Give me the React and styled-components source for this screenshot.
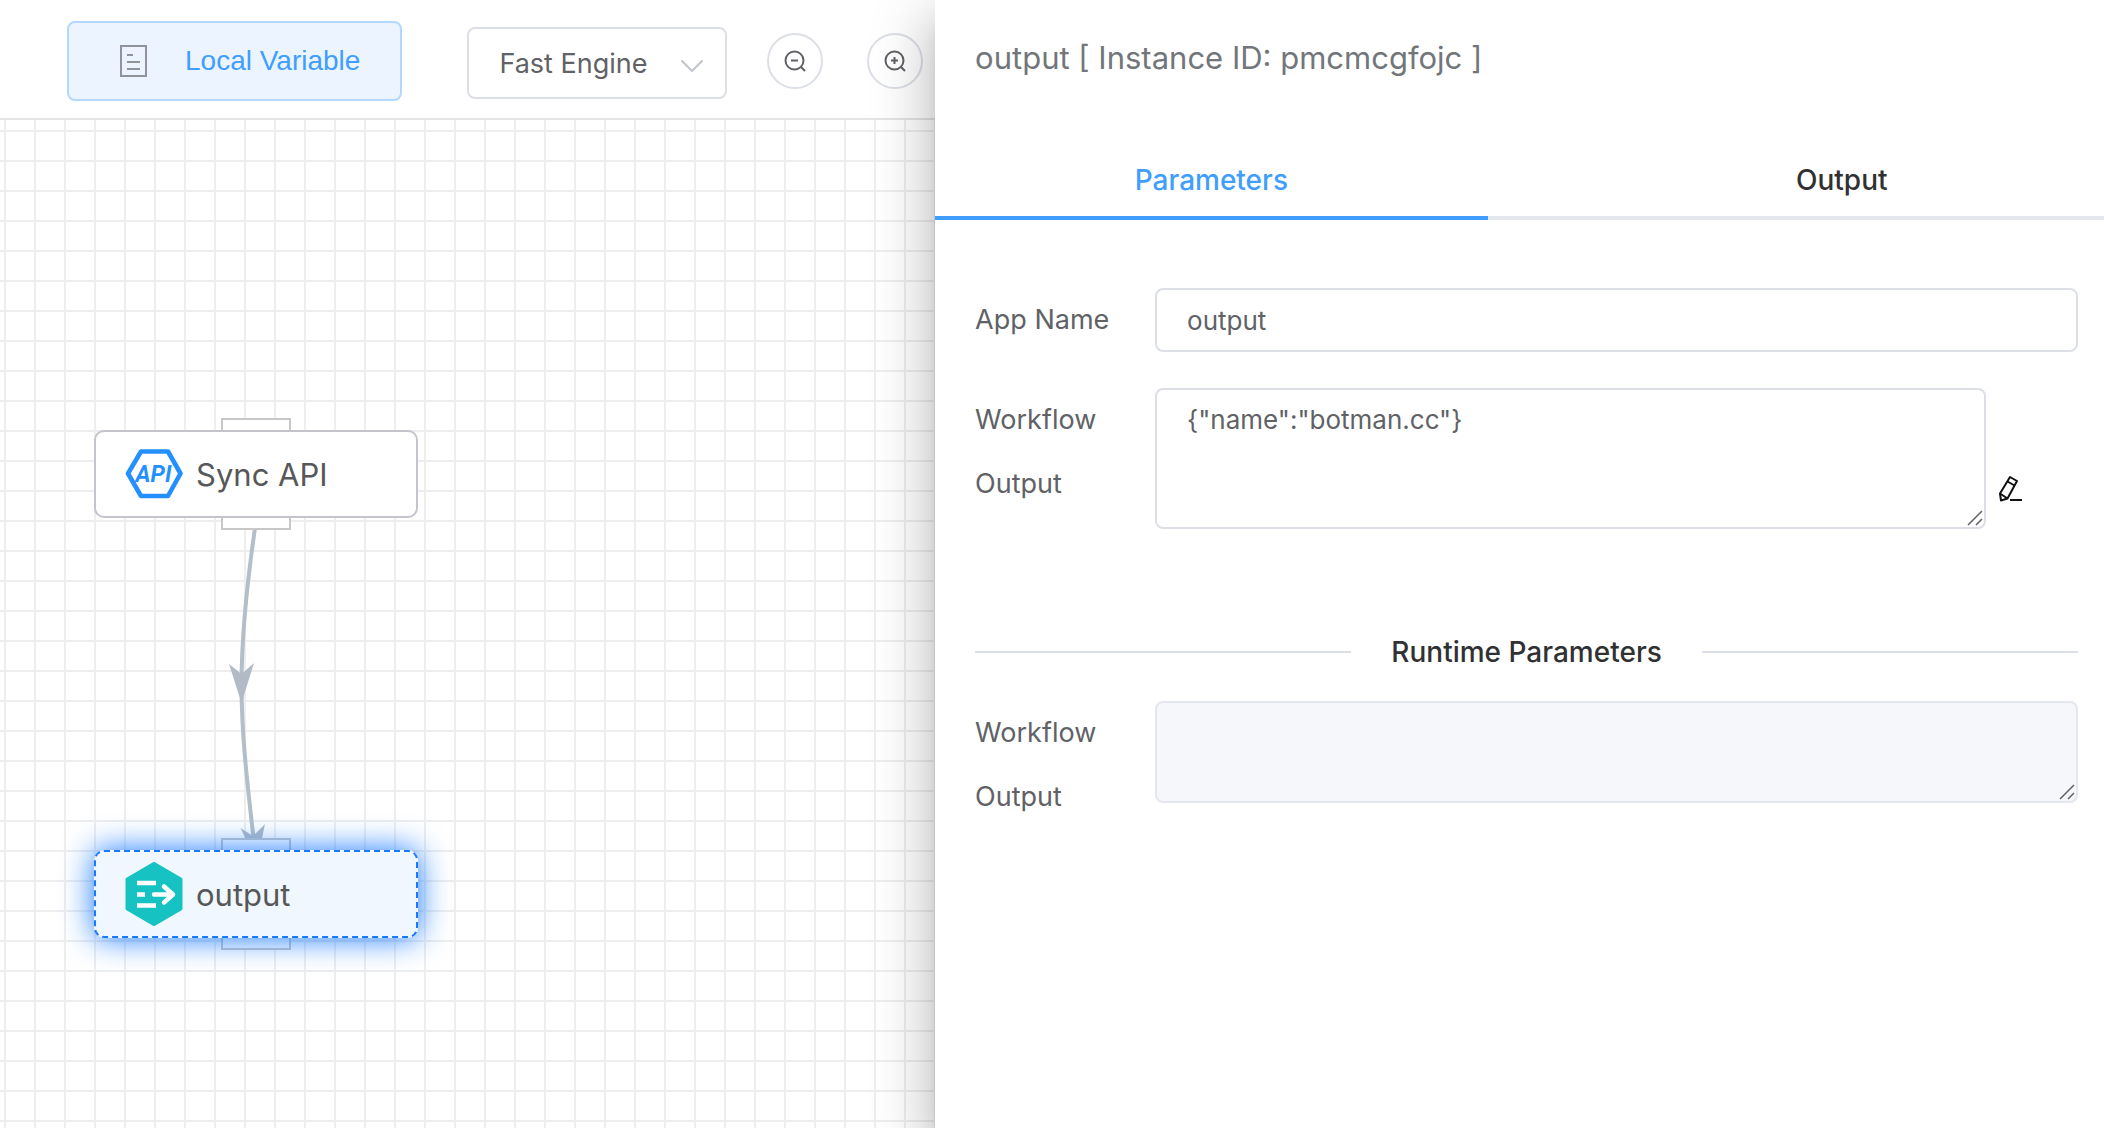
import React from "react";
import styled, { createGlobalStyle, css } from "styled-components";

const GlobalStyle = createGlobalStyle`
  *, *::before, *::after { box-sizing: border-box; }
  body {
    margin: 0;
    background: #fff;
    color: #606266;
    font-family: Inter, "Liberation Sans", sans-serif;
    font-size: 27px;
  }
  button, input, select, textarea { font: inherit; color: inherit; margin: 0; }
`;

const Page = styled.div`
  display: grid;
  grid-template-columns: minmax(0, 4fr) minmax(0, 5fr);
  min-height: 100vh;
  overflow: hidden;
`;

const Workspace = styled.main`
  display: flex;
  flex-direction: column;
  min-width: 0;
`;

const Toolbar = styled.header`
  display: flex;
  align-items: center;
  height: 120px;
  padding: 4px 0 0 67px;
  border-bottom: 2px solid #e4e4e4;
  background: #fff;
`;

const VariableButton = styled.button`
  display: flex;
  align-items: center;
  flex: none;
  gap: 37px;
  height: 80px;
  padding: 0 40px 0 50px;
  border: 2px solid #b3d8ff;
  border-radius: 8px;
  background: #ecf5ff;
  color: #409eff;
  font-family: "Liberation Sans", Arial, sans-serif;
  font-size: 28px;
  white-space: nowrap;
`;

const SelectBox = styled.div`
  position: relative;
  flex: none;
  width: 260px;
  margin: 0 40px 0 65px;
  padding-top: 4px;

  svg {
    position: absolute;
    right: 24px;
    top: 37px;
    pointer-events: none;
  }
`;

const Select = styled.select`
  display: block;
  appearance: none;
  width: 100%;
  height: 72px;
  padding: 0 64px 0 30px;
  border: 2px solid #dcdfe6;
  border-radius: 8px;
  background: #fff;
  font-size: 27px;
`;

const ZoomButtons = styled.div`
  display: flex;
  gap: 44px;
`;

const RoundButton = styled.button`
  display: grid;
  place-items: center;
  flex: none;
  width: 56px;
  height: 56px;
  padding: 0;
  border: 2px solid #dcdfe6;
  border-radius: 50%;
  background: #fff;
`;

const Canvas = styled.section`
  position: relative;
  flex: 1;
  background-color: #fff;
  background-image:
    linear-gradient(to right, #eee 2px, transparent 2px),
    linear-gradient(to bottom, #eee 2px, transparent 2px);
  background-size: 30px 30px;
  background-position: 4px 10px;
`;

const Links = styled.svg`
  position: absolute;
  left: 0;
  top: 0;
`;

const Node = styled.div`
  position: absolute;
  left: 94px;
  top: ${(p) => p.$top}px;
  width: 324px;
  height: 88px;
`;

const Port = styled.span`
  position: absolute;
  left: 127px;
  width: 70px;
  height: 24px;
  border: 2px solid #c8c8c8;
  background: #fff;
  ${(p) => (p.$side === "top" ? "top: -12px;" : "bottom: -12px;")}
`;

const NodeBody = styled.div`
  position: relative;
  display: flex;
  align-items: center;
  gap: 13px;
  height: 100%;
  padding: 0 29px;
  border: 2px solid #c4c4cc;
  border-radius: 10px;
  background: #fff;
  color: #565758;
  font-size: 31px;

  ${(p) =>
    p.$selected &&
    css`
      border: 2px dashed #1879ff;
      background: #f0f7ff;
      box-shadow: 0 0 32px #1879ff;
    `}
`;

const Drawer = styled.aside`
  position: relative;
  min-width: 0;
  background: #fff;
  box-shadow:
    0 16px 20px -10px rgba(0, 0, 0, 0.2),
    0 32px 48px 4px rgba(0, 0, 0, 0.14),
    0 12px 60px 10px rgba(0, 0, 0, 0.12);
`;

const Title = styled.h1`
  margin: 0;
  padding: 40px 40px 64px;
  color: #72767b;
  font-size: 31px;
  font-weight: 400;
  line-height: 36px;
`;

const Tabs = styled.div`
  display: flex;
  height: 80px;
  box-shadow: inset 0 -4px #e4e7ed;
`;

const Tab = styled.button`
  position: relative;
  width: 50%;
  padding: ${(p) => (p.$active ? "0 32px 0 0" : "0 0 0 60px")};
  border: 0;
  background: none;
  color: ${(p) => (p.$active ? "#409eff" : "#303133")};
  font-size: 28px;
  font-weight: 500;
  line-height: 80px;

  ${(p) =>
    p.$active &&
    css`
      &::after {
        content: "";
        position: absolute;
        left: 0;
        right: 32px;
        bottom: 0;
        height: 4px;
        background: #409eff;
      }
    `}
`;

const Form = styled.form`
  padding: 68px 26px 40px 40px;
`;

const Row = styled.div`
  display: flex;
  align-items: flex-start;
  margin-bottom: ${(p) => (p.$last ? 0 : 36)}px;
`;

const Label = styled.label`
  flex: none;
  width: 180px;
  padding-right: 24px;
  font-size: 27px;
  line-height: 64px;
`;

const field = css`
  display: block;
  width: 100%;
  border: 2px solid #dcdfe6;
  border-radius: 8px;
  background: #fff;
  color: #606266;
  font-size: 26px;
`;

const TextInput = styled.input`
  ${field}
  height: 64px;
  padding: 0 30px;
`;

const AreaWrap = styled.div`
  position: relative;
  flex: 1;
  min-width: 0;

  svg {
    position: absolute;
    right: 3px;
    bottom: 3px;
    pointer-events: none;
  }
`;

const Area = styled.textarea`
  ${field}
  height: ${(p) => p.$height}px;
  padding: 10px 30px;
  line-height: 39px;
  resize: none;

  &:disabled {
    border-color: #e4e7ed;
    background: #f5f7fa;
  }
`;

const EditButton = styled.button`
  flex: none;
  align-self: center;
  width: 92px;
  margin-top: 60px;
  padding: 0 0 0 12px;
  border: 0;
  background: none;
  text-align: left;
  line-height: 0;
`;

const Divider = styled.h2`
  display: flex;
  align-items: center;
  gap: 40px;
  margin: 103px 0 29px;
  color: #303133;
  font-size: 28px;
  font-weight: 500;
  line-height: 40px;

  &::before,
  &::after {
    content: "";
    flex: 1;
    height: 2px;
    background: #dcdfe6;
  }
`;

const DocumentIcon = () => (
  <svg width="29" height="32" viewBox="0 0 29 32" fill="none" stroke="#909399" strokeWidth="2">
    <rect x="2" y="1" width="25" height="30" />
    <path d="M8 10h6M8 17h13M8 24h13" />
  </svg>
);

const ChevronIcon = () => (
  <svg width="22" height="13" viewBox="0 0 22 13" fill="none" stroke="#c0c4cc" strokeWidth="2">
    <path d="M1 1l10 10L21 1" strokeLinecap="round" strokeLinejoin="round" />
  </svg>
);

const MagnifierIcon = ({ plus }) => (
  <svg width="24" height="24" viewBox="0 0 24 24" fill="none" stroke="#606266" strokeWidth="2">
    <circle cx="11.5" cy="11.5" r="9" />
    <path d="M18 18l4 4M8 11.5h7" />
    {plus && <path d="M11.5 8v7" />}
  </svg>
);

const ApiIcon = () => (
  <svg width="58" height="52" viewBox="0 0 58 52">
    <path
      d="M16 3.5h27l12.5 22L43 48H16L3 25.5z"
      fill="#fff"
      stroke="#2490ff"
      strokeWidth="4.6"
      strokeLinejoin="round"
    />
    <text
      x="28.5"
      y="34"
      textAnchor="middle"
      fill="#2490ff"
      fontFamily="Roboto, sans-serif"
      fontSize="23"
      fontWeight="700"
      fontStyle="italic"
    >
      API
    </text>
  </svg>
);

const OutputIcon = () => (
  <svg width="58" height="64" viewBox="0 0 58 64">
    <path
      d="M29 2L55.500 17.500V46.500L29 62L2.500 46.500V17.500z"
      fill="#17c2c2"
      stroke="#17c2c2"
      strokeWidth="4"
      strokeLinejoin="round"
    />
    <path d="M12 21h19M12 32.500h8M12 43.500h19" stroke="#fff" strokeWidth="4.500" />
    <path
      d="M29 32.500h19M39 24.500l9 8-9 8"
      fill="none"
      stroke="#fff"
      strokeWidth="4.500"
      strokeLinecap="round"
      strokeLinejoin="round"
    />
  </svg>
);

const PencilIcon = () => (
  <svg width="26" height="28" viewBox="0 0 26 28" fill="none" stroke="#111" strokeWidth="2">
    <path d="M12 2l7 4-9.500 17.500-6.500 2-1-7z" strokeLinejoin="round" />
    <path d="M9.500 6.500l7 4M2 18.500l7.500 5" />
    <path d="M12 25h12" />
  </svg>
);

const ResizeGrip = () => (
  <svg width="16" height="16" viewBox="0 0 16 16" fill="none" stroke="#606060" strokeWidth="1.500">
    <path d="M1 15L15 1M9 15l6-6" />
  </svg>
);

export default function App() {
  return (
    <Page>
      <GlobalStyle />
      <Workspace>
        <Toolbar>
          <VariableButton type="button">
            <DocumentIcon />
            Local Variable
          </VariableButton>
          <SelectBox>
            <Select aria-label="Engine" defaultValue="fast">
              <option value="fast">Fast Engine</option>
            </Select>
            <ChevronIcon />
          </SelectBox>
          <ZoomButtons>
            <RoundButton type="button" aria-label="Zoom out">
              <MagnifierIcon />
            </RoundButton>
            <RoundButton type="button" aria-label="Zoom in">
              <MagnifierIcon plus />
            </RoundButton>
          </ZoomButtons>
        </Toolbar>
        <Canvas>
          <Links width="420" height="800" viewBox="0 0 420 800">
            <path
              d="M255 408C246 470 241.500 520 241.500 566S247 662 254 722"
              fill="none"
              stroke="#b2bec8"
              strokeWidth="4"
            />
            <path d="M229 544l12.500 10 12.500-11-12.500 40z" fill="#b2bbc5" />
            <path d="M240.500 708l12.500 8 12-12-8 38z" fill="#b2bbc5" />
          </Links>
          <Node $top={310}>
            <Port $side="top" />
            <Port $side="bottom" />
            <NodeBody>
              <ApiIcon />
              Sync API
            </NodeBody>
          </Node>
          <Node $top={730}>
            <Port $side="top" />
            <Port $side="bottom" />
            <NodeBody $selected>
              <OutputIcon />
              output
            </NodeBody>
          </Node>
        </Canvas>
      </Workspace>
      <Drawer>
        <Title>output [ Instance ID: pmcmcgfojc ]</Title>
        <Tabs role="tablist">
          <Tab type="button" role="tab" aria-selected="true" $active>
            Parameters
          </Tab>
          <Tab type="button" role="tab" aria-selected="false">
            Output
          </Tab>
        </Tabs>
        <Form>
          <Row>
            <Label htmlFor="app-name">App Name</Label>
            <TextInput id="app-name" defaultValue="output" />
          </Row>
          <Row $last>
            <Label htmlFor="workflow-output">Workflow Output</Label>
            <AreaWrap>
              <Area
                id="workflow-output"
                $height={141}
                spellCheck={false}
                defaultValue={'{"name":"botman.cc"}'}
              />
              <ResizeGrip />
            </AreaWrap>
            <EditButton type="button" aria-label="Edit output">
              <PencilIcon />
            </EditButton>
          </Row>
          <Divider>Runtime Parameters</Divider>
          <Row $last>
            <Label htmlFor="runtime-output">Workflow Output</Label>
            <AreaWrap>
              <Area id="runtime-output" $height={102} disabled />
              <ResizeGrip />
            </AreaWrap>
          </Row>
        </Form>
      </Drawer>
    </Page>
  );
}
